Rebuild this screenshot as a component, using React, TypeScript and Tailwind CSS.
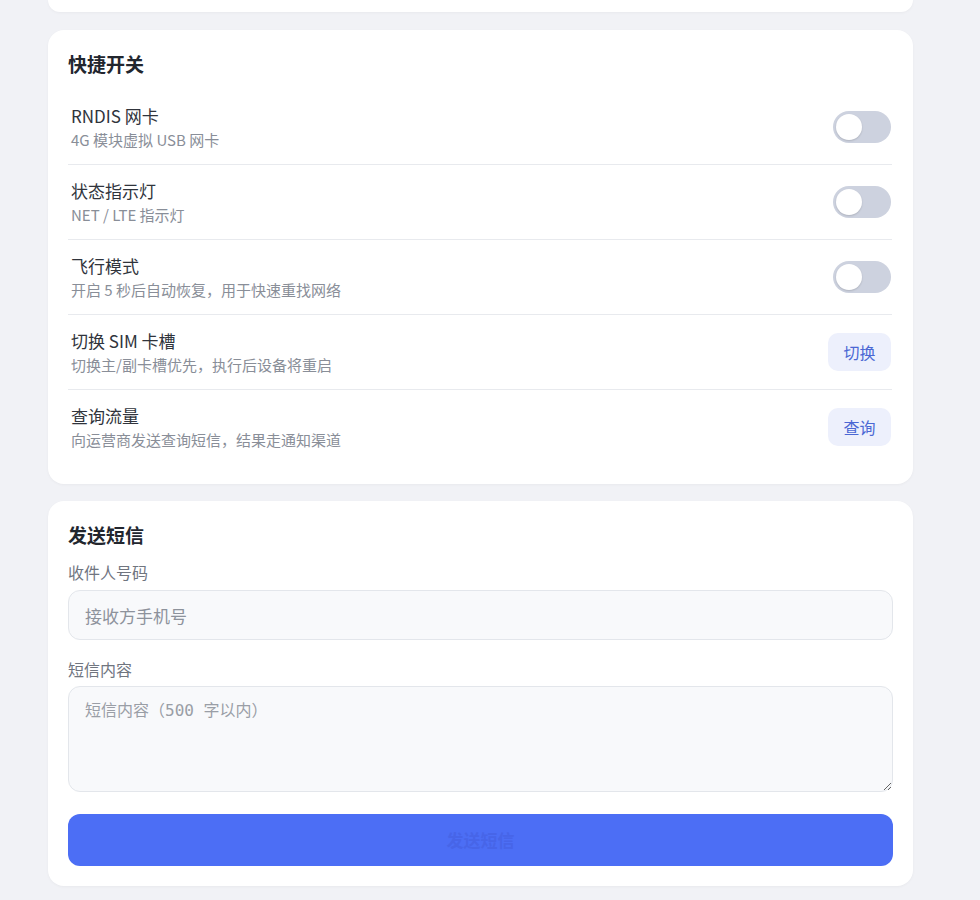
const FONT = { fontFamily: '"Noto Sans CJK SC", "Noto Sans", sans-serif' };

type Row = {
  title: string;
  desc: string;
  kind: 'toggle' | 'button';
  action?: string;
};

const ROWS: Row[] = [
  { title: 'RNDIS 网卡', desc: '4G 模块虚拟 USB 网卡', kind: 'toggle' },
  { title: '状态指示灯', desc: 'NET / LTE 指示灯', kind: 'toggle' },
  { title: '飞行模式', desc: '开启 5 秒后自动恢复，用于快速重找网络', kind: 'toggle' },
  { title: '切换 SIM 卡槽', desc: '切换主/副卡槽优先，执行后设备将重启', kind: 'button', action: '切换' },
  { title: '查询流量', desc: '向运营商发送查询短信，结果走通知渠道', kind: 'button', action: '查询' },
];

function Toggle() {
  return (
    <button className="flex h-[32px] w-[58px] items-center rounded-full bg-[#cdd2df] px-[3px]">
      <span className="h-[26px] w-[26px] rounded-full bg-white shadow-[0_1px_2px_rgba(0,0,0,0.15)]" />
    </button>
  );
}

export default function App() {
  return (
    <div className="min-h-[900px] bg-[#f1f2f6] pl-12 text-[#2b2f38]" style={FONT}>
      <div className="w-[865px]">
        {/* previous card, scrolled off */}
        <div className="h-3 rounded-b-2xl bg-white shadow-[0_1px_3px_rgba(0,0,0,0.04)]" />

        {/* Quick switches */}
        <div className="mt-[18px] rounded-2xl bg-white py-5 pl-5 pr-[21px] shadow-[0_1px_3px_rgba(0,0,0,0.04)]">
          <h2 className="text-[19px] font-bold leading-7 text-[#22262e]">快捷开关</h2>
          <div className="mt-3">
            {ROWS.map((row, i) => (
              <div
                key={row.title}
                className={`flex items-center justify-between py-[14px] pl-[3px] pr-[1px] ${
                  i < ROWS.length - 1 ? 'border-b border-[#e8eaee]' : ''
                }`}
              >
                <div>
                  <div className="text-[17px] leading-6 text-[#30343c]">{row.title}</div>
                  <div className="mt-[2px] text-[15px] leading-5 text-[#898e98]">{row.desc}</div>
                </div>
                {row.kind === 'toggle' ? (
                  <Toggle />
                ) : (
                  <button className="h-[38px] w-[63px] rounded-[10px] bg-[#edf0fc] text-[16px] text-[#4b68d4]">
                    {row.action}
                  </button>
                )}
              </div>
            ))}
          </div>
        </div>

        {/* Send SMS */}
        <div className="mt-[17px] rounded-2xl bg-white py-5 pl-5 pr-[20px] shadow-[0_1px_3px_rgba(0,0,0,0.04)]">
          <h2 className="text-[19px] font-bold leading-7 text-[#22262e]">发送短信</h2>
          <label className="mt-3 block text-[16px] leading-[22px] text-[#70757f]">收件人号码</label>
          <input
            className="mt-[7px] block h-[50px] w-full rounded-xl border border-[#e3e6eb] bg-[#f8f9fb] px-4 text-[17px] leading-[24px] outline-none placeholder:text-[#8d929b]"
            placeholder="接收方手机号"
            style={FONT}
          />
          <label className="mt-[18px] block text-[16px] leading-[22px] text-[#70757f]">短信内容</label>
          <textarea
            className="mt-[6px] block h-[106px] w-full resize-y rounded-xl border border-[#e3e6eb] bg-[#f8f9fb] px-4 py-3 text-[16px] leading-6 outline-none placeholder:text-[#9a9ea6]"
            placeholder="短信内容（500 字以内）"
            style={{ fontFamily: '"DejaVu Sans Mono", "Noto Sans CJK SC", monospace' }}
          />
          <button className="mt-[22px] h-[52px] w-full rounded-xl bg-[#4c6ef5] text-[17px] font-semibold text-[#4765e8]">
            发送短信
          </button>
        </div>
      </div>
    </div>
  );
}
